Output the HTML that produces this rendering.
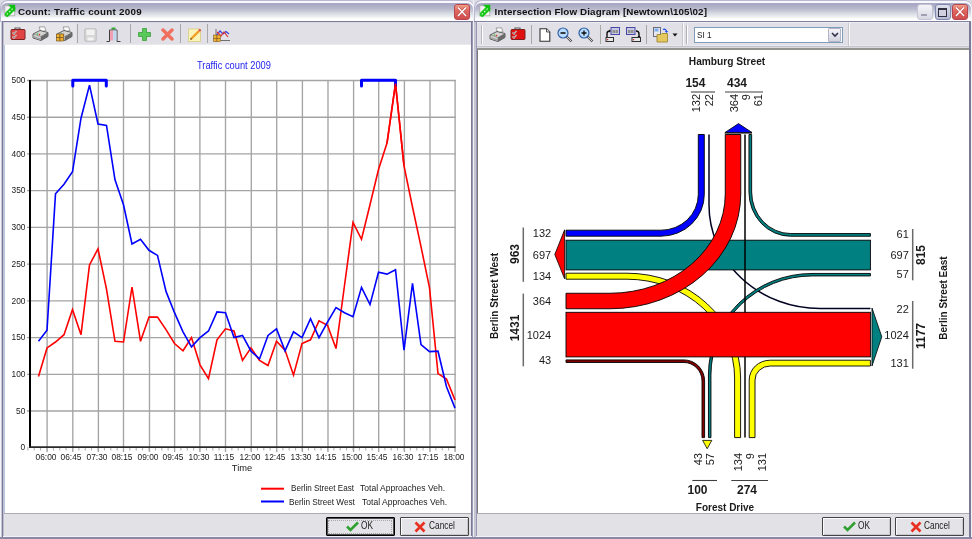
<!DOCTYPE html>
<html><head><meta charset="utf-8"><style>
html,body{margin:0;padding:0;width:972px;height:539px;overflow:hidden;background:#dcdce4;}
#root{position:absolute;left:0;top:0;width:972px;height:539px;will-change:transform;}
*{box-sizing:border-box;}
.abs{position:absolute;}
.t8{position:absolute;font:9.3px/11px 'Liberation Sans', sans-serif;color:#202020;white-space:nowrap;}
.tl{position:absolute;font:9px/11px 'Liberation Sans', sans-serif;color:#1a1a1a;white-space:nowrap;}
.title{position:absolute;background:linear-gradient(#a8a8c4 0px,#aaaac6 2px,#babace 6px,#d4d8e0 10px,#eef0f3 14px,#fff 16px,#fff 18px);}
.ttext{position:absolute;top:5.7px;font:bold 9.8px/11px 'Liberation Sans', sans-serif;color:#101010;white-space:nowrap;letter-spacing:0.25px;}
.tb{position:absolute;background:#e1e0e6;}
.panel{position:absolute;background:#e2e1e6;}
.btn{position:absolute;height:19px;border:1px solid #444;border-radius:1px;background:#e4e4e8;box-shadow:inset 1px 1px 0 #fbfbfc, inset -1px -1px 0 #c8c8cc;}
</style></head><body><div id="root">
<!-- LEFT WINDOW -->
<div class="abs" style="left:0;top:0;width:474px;height:539px;background:#f4f4f8;border-radius:7px 7px 0 0;"></div>
<div class="abs" style="left:0;top:0;width:474px;height:22px;border-radius:7px 7px 0 0;background:#b8b8d0;"></div>
<div class="abs" style="left:0.5px;top:1px;width:473px;height:21px;border-radius:7px 7px 0 0;background:#f8f8fc;"></div>
<div class="title" style="left:1px;top:2.5px;width:472px;height:18.5px;border-radius:6px 6px 0 0;"></div>
<div class="abs" style="left:1px;top:21px;width:1px;height:516px;background:#c8c8d8;"></div>
<div class="abs" style="left:2px;top:21px;width:472px;height:516px;background:#7a7a98;"></div>
<div class="abs" style="left:3px;top:22px;width:1px;height:515px;background:#c0c0d0;"></div>
<div class="abs" style="left:472px;top:22px;width:1px;height:515px;background:#9a9ab2;"></div>
<div class="abs" style="left:473px;top:0px;width:1px;height:539px;background:#f0f0f6;"></div>
<div class="abs" style="left:4px;top:22px;width:467px;height:1px;background:#d8d8e2;"></div>
<div class="tb" style="left:4px;top:23px;width:467px;height:22px;"></div>
<div class="abs" style="left:4px;top:23px;width:72px;height:21px;background:#e5e5ea;"></div>
<div class="abs" style="left:4px;top:44px;width:467px;height:1px;background:#eaeaee;"></div>
<div class="abs" style="left:4px;top:45px;width:1px;height:468px;background:#b8cce0;"></div>
<div class="abs" style="left:5px;top:45px;width:466px;height:468px;background:#fff;"></div>
<div class="abs" style="left:4px;top:513px;width:467px;height:1px;background:#acacb0;"></div>
<div class="panel" style="left:4px;top:514px;width:467px;height:22px;"></div><div class="abs" style="left:3px;top:536px;width:469px;height:1px;background:#f4f4f8;"></div>
<div class="abs" style="left:0;top:537px;width:474px;height:2px;background:#8a8aa6;"></div>
<div class="ttext" style="left:18px;">Count: Traffic count 2009</div>
<svg class="abs" style="left:3px;top:4px" width="14" height="14" viewBox="0 0 14 14">
<rect x="1.8" y="1.8" width="10" height="10" fill="#f2f2f2" stroke="#a8a8a8" stroke-width="0.8"/>
<path d="M4.2,10.3 L10,4.5" stroke="#18c818" stroke-width="5" stroke-linecap="round"/>
<path d="M5,0.8 L12.2,0.8 L12.2,8 Z" fill="#10c010"/>
<path d="M3.8,10.4 L4.8,9.4 M6.2,8 L7.2,7 M8.6,5.6 L9.6,4.6" stroke="#e8ffe0" stroke-width="1.1"/>
</svg><svg class="abs" style="left:10px;top:26px" width="16" height="16" viewBox="0 0 16 16">
<path d="M5,3.5 L5,2 L10,2 L10,3.5" fill="none" stroke="#606060" stroke-width="1.2"/>
<rect x="1" y="3.5" width="14" height="10" rx="1" fill="#e04444" stroke="#7a2020" stroke-width="1"/>
<path d="M2.5,6.5 L4,8 L6.5,4.8 M2.5,10.5 L4,12 L6.5,8.8" fill="none" stroke="#e8e8e8" stroke-width="1.3"/><path d="M2.5,6.5 L4,8 L6.5,4.8 M2.5,10.5 L4,12 L6.5,8.8" fill="none" stroke="#606060" stroke-width="0.6"/>
</svg><svg class="abs" style="left:32px;top:26px" width="17" height="16" viewBox="0 0 17 16">
<path d="M7,1 L12.5,0.8 L14,4.5 L9,6 Z" fill="#fafafa" stroke="#808080" stroke-width="0.7"/>
<path d="M1,8 L8,4.5 L16,6.5 L16,10.5 L9,14.5 L1,12 Z" fill="#d4d4d4" stroke="#505050" stroke-width="0.9"/>
<path d="M1,8 L9,10.5 L16,6.5 M9,10.5 L9,14.5" fill="none" stroke="#707070" stroke-width="0.6"/>
<path d="M9,14.5 L16,10.5 L16,6.5 L9,10.5 Z" fill="#6a6a6a"/>
<path d="M1.5,11.5 L9,14 L9,12.5 L1.5,10 Z" fill="#a0a0a0"/>
<circle cx="5.5" cy="8" r="0.8" fill="#30c030"/><circle cx="7.5" cy="8.6" r="0.8" fill="#e03030"/>

</svg><svg class="abs" style="left:56px;top:26px" width="17" height="16" viewBox="0 0 17 16">
<path d="M7,1 L12.5,0.8 L14,4.5 L9,6 Z" fill="#fafafa" stroke="#808080" stroke-width="0.7"/>
<path d="M1,8 L8,4.5 L16,6.5 L16,10.5 L9,14.5 L1,12 Z" fill="#d4d4d4" stroke="#505050" stroke-width="0.9"/>
<path d="M1,8 L9,10.5 L16,6.5 M9,10.5 L9,14.5" fill="none" stroke="#707070" stroke-width="0.6"/>
<path d="M9,14.5 L16,10.5 L16,6.5 L9,10.5 Z" fill="#6a6a6a"/>
<path d="M1.5,11.5 L9,14 L9,12.5 L1.5,10 Z" fill="#a0a0a0"/>
<circle cx="5.5" cy="8" r="0.8" fill="#30c030"/><circle cx="7.5" cy="8.6" r="0.8" fill="#e03030"/>
<g fill="#f0b030" stroke="#705020" stroke-width="0.6"><rect x="0.5" y="8" width="3.5" height="3.5"/><rect x="4" y="8" width="3.5" height="3.5"/><rect x="0.5" y="11.5" width="3.5" height="3.5"/><rect x="4" y="11.5" width="3.5" height="3.5"/></g>
</svg><div class="abs" style="left:77px;top:24px;width:1px;height:19px;background:#a8a8a8;"></div><svg class="abs" style="left:84px;top:28px" width="13" height="14" viewBox="0 0 13 14">
<rect x="0.8" y="0.8" width="11.4" height="12.4" rx="1" fill="#d8d8d8" stroke="#b8b8b8" stroke-width="0.9"/>
<rect x="2.5" y="1.5" width="8" height="5.5" fill="#f2f2f2"/>
<rect x="3.5" y="9.5" width="6" height="3" fill="#f4f4f4"/>
</svg><svg class="abs" style="left:106px;top:27px" width="16" height="16" viewBox="0 0 16 16">
<rect x="5.5" y="0.5" width="4" height="2" fill="#30b030"/>
<path d="M0.5,14.5 L3.5,14.5 L3.5,3 L11,3 L11,14.5 L14.5,14.5" fill="none" stroke="#404040" stroke-width="1"/>
<rect x="4" y="3.5" width="3" height="10" fill="#f0a0b0"/><rect x="7.2" y="3.5" width="3.3" height="10" fill="#c0d8f0"/>
</svg><div class="abs" style="left:130px;top:24px;width:1px;height:19px;background:#a8a8a8;"></div><svg class="abs" style="left:138px;top:28px" width="13" height="13" viewBox="0 0 13 13">
<path d="M4.5,0.5 H8.5 V4.5 H12.5 V8.5 H8.5 V12.5 H4.5 V8.5 H0.5 V4.5 H4.5 Z" fill="#58c858" stroke="#38a038" stroke-width="0.8"/>
</svg><svg class="abs" style="left:160.5px;top:28px" width="13" height="13" viewBox="0 0 13 13">
<path d="M2,2 L11,11 M11,2 L2,11" stroke="#f07060" stroke-width="3.4" stroke-linecap="round"/>
</svg><div class="abs" style="left:180px;top:24px;width:1px;height:19px;background:#a8a8a8;"></div><svg class="abs" style="left:187.5px;top:27.5px" width="14" height="14" viewBox="0 0 14 14">
<rect x="0.5" y="1" width="12" height="12.5" fill="#fbf4b8" stroke="#d8cc80" stroke-width="0.8"/>
<path d="M3,11 L11,3" stroke="#f0a020" stroke-width="2.4"/>
<path d="M11,3 L12.5,1.5" stroke="#e05050" stroke-width="2.4"/>
<path d="M2.5,11.5 L3.5,10.5" stroke="#604020" stroke-width="1.5"/>
</svg><div class="abs" style="left:207px;top:24px;width:1px;height:19px;background:#a8a8a8;"></div><svg class="abs" style="left:212.5px;top:29px" width="17" height="13" viewBox="0 0 17 13">
<path d="M3,0 V13 M1,11.5 H17" stroke="#707070" stroke-width="1"/>
<path d="M3,7 L7,2 L10,5 L13,2.5 L16,5" fill="none" stroke="#3040e0" stroke-width="1.2"/>
<path d="M4,3 L8,7 L11,3 L15,8" fill="none" stroke="#e03030" stroke-width="1.2"/>
<g fill="#f0b030" stroke="#705020" stroke-width="0.5"><rect x="0.5" y="6" width="3.5" height="3.3"/><rect x="4" y="6" width="3.5" height="3.3"/><rect x="0.5" y="9.3" width="3.5" height="3.3"/><rect x="4" y="9.3" width="3.5" height="3.3"/></g>
</svg>
<div class="abs" style="left:454px;top:4px;width:16px;height:16px;border-radius:3px;background:linear-gradient(#f0a088,#e06860 40%,#d04c4c);border:1px solid #b84450;"></div>
<svg class="abs" style="left:454px;top:4px" width="16" height="16"><path d="M4,3.5 L12,12 M12,3.5 L4,12" stroke="#a83838" stroke-width="2.6" opacity="0.6"/><path d="M4,3.5 L12,12 M12,3.5 L4,12" stroke="#fff" stroke-width="1.5"/></svg>
<svg class="abs" style="left:0;top:0" width="473" height="539">
<line x1="27" y1="80.5" x2="455.8" y2="80.5" stroke="#a4a4a4" stroke-width="1.35"/><line x1="27" y1="117.2" x2="455.8" y2="117.2" stroke="#a4a4a4" stroke-width="1.35"/><line x1="27" y1="153.9" x2="455.8" y2="153.9" stroke="#a4a4a4" stroke-width="1.35"/><line x1="27" y1="190.6" x2="455.8" y2="190.6" stroke="#a4a4a4" stroke-width="1.35"/><line x1="27" y1="227.4" x2="455.8" y2="227.4" stroke="#a4a4a4" stroke-width="1.35"/><line x1="27" y1="264.1" x2="455.8" y2="264.1" stroke="#a4a4a4" stroke-width="1.35"/><line x1="27" y1="300.8" x2="455.8" y2="300.8" stroke="#a4a4a4" stroke-width="1.35"/><line x1="27" y1="337.6" x2="455.8" y2="337.6" stroke="#a4a4a4" stroke-width="1.35"/><line x1="27" y1="374.3" x2="455.8" y2="374.3" stroke="#a4a4a4" stroke-width="1.35"/><line x1="27" y1="411.0" x2="455.8" y2="411.0" stroke="#a4a4a4" stroke-width="1.35"/><line x1="47.1" y1="80" x2="47.1" y2="452" stroke="#a4a4a4" stroke-width="1.35"/><line x1="72.8" y1="80" x2="72.8" y2="452" stroke="#a4a4a4" stroke-width="1.35"/><line x1="98.4" y1="80" x2="98.4" y2="452" stroke="#a4a4a4" stroke-width="1.35"/><line x1="123.5" y1="80" x2="123.5" y2="452" stroke="#a4a4a4" stroke-width="1.35"/><line x1="149.5" y1="80" x2="149.5" y2="452" stroke="#a4a4a4" stroke-width="1.35"/><line x1="174.6" y1="80" x2="174.6" y2="452" stroke="#a4a4a4" stroke-width="1.35"/><line x1="199.9" y1="80" x2="199.9" y2="452" stroke="#a4a4a4" stroke-width="1.35"/><line x1="225.5" y1="80" x2="225.5" y2="452" stroke="#a4a4a4" stroke-width="1.35"/><line x1="251.3" y1="80" x2="251.3" y2="452" stroke="#a4a4a4" stroke-width="1.35"/><line x1="276.7" y1="80" x2="276.7" y2="452" stroke="#a4a4a4" stroke-width="1.35"/><line x1="302.4" y1="80" x2="302.4" y2="452" stroke="#a4a4a4" stroke-width="1.35"/><line x1="328.0" y1="80" x2="328.0" y2="452" stroke="#a4a4a4" stroke-width="1.35"/><line x1="353.6" y1="80" x2="353.6" y2="452" stroke="#a4a4a4" stroke-width="1.35"/><line x1="378.7" y1="80" x2="378.7" y2="452" stroke="#a4a4a4" stroke-width="1.35"/><line x1="404.4" y1="80" x2="404.4" y2="452" stroke="#a4a4a4" stroke-width="1.35"/><line x1="430.0" y1="80" x2="430.0" y2="452" stroke="#a4a4a4" stroke-width="1.35"/><line x1="455.1" y1="80" x2="455.1" y2="452" stroke="#a4a4a4" stroke-width="1.35"/><line x1="27.9" y1="447" x2="27.9" y2="450.5" stroke="#a9a9a9" stroke-width="1"/><line x1="34.2" y1="447" x2="34.2" y2="450.5" stroke="#a9a9a9" stroke-width="1"/><line x1="40.6" y1="447" x2="40.6" y2="450.5" stroke="#a9a9a9" stroke-width="1"/><line x1="47.0" y1="447" x2="47.0" y2="450.5" stroke="#a9a9a9" stroke-width="1"/><line x1="53.4" y1="447" x2="53.4" y2="450.5" stroke="#a9a9a9" stroke-width="1"/><line x1="59.8" y1="447" x2="59.8" y2="450.5" stroke="#a9a9a9" stroke-width="1"/><line x1="66.1" y1="447" x2="66.1" y2="450.5" stroke="#a9a9a9" stroke-width="1"/><line x1="72.5" y1="447" x2="72.5" y2="450.5" stroke="#a9a9a9" stroke-width="1"/><line x1="78.9" y1="447" x2="78.9" y2="450.5" stroke="#a9a9a9" stroke-width="1"/><line x1="85.2" y1="447" x2="85.2" y2="450.5" stroke="#a9a9a9" stroke-width="1"/><line x1="91.6" y1="447" x2="91.6" y2="450.5" stroke="#a9a9a9" stroke-width="1"/><line x1="98.0" y1="447" x2="98.0" y2="450.5" stroke="#a9a9a9" stroke-width="1"/><line x1="104.4" y1="447" x2="104.4" y2="450.5" stroke="#a9a9a9" stroke-width="1"/><line x1="110.8" y1="447" x2="110.8" y2="450.5" stroke="#a9a9a9" stroke-width="1"/><line x1="117.1" y1="447" x2="117.1" y2="450.5" stroke="#a9a9a9" stroke-width="1"/><line x1="123.5" y1="447" x2="123.5" y2="450.5" stroke="#a9a9a9" stroke-width="1"/><line x1="129.9" y1="447" x2="129.9" y2="450.5" stroke="#a9a9a9" stroke-width="1"/><line x1="136.2" y1="447" x2="136.2" y2="450.5" stroke="#a9a9a9" stroke-width="1"/><line x1="142.6" y1="447" x2="142.6" y2="450.5" stroke="#a9a9a9" stroke-width="1"/><line x1="149.0" y1="447" x2="149.0" y2="450.5" stroke="#a9a9a9" stroke-width="1"/><line x1="155.4" y1="447" x2="155.4" y2="450.5" stroke="#a9a9a9" stroke-width="1"/><line x1="161.8" y1="447" x2="161.8" y2="450.5" stroke="#a9a9a9" stroke-width="1"/><line x1="168.1" y1="447" x2="168.1" y2="450.5" stroke="#a9a9a9" stroke-width="1"/><line x1="174.5" y1="447" x2="174.5" y2="450.5" stroke="#a9a9a9" stroke-width="1"/><line x1="180.9" y1="447" x2="180.9" y2="450.5" stroke="#a9a9a9" stroke-width="1"/><line x1="187.2" y1="447" x2="187.2" y2="450.5" stroke="#a9a9a9" stroke-width="1"/><line x1="193.6" y1="447" x2="193.6" y2="450.5" stroke="#a9a9a9" stroke-width="1"/><line x1="200.0" y1="447" x2="200.0" y2="450.5" stroke="#a9a9a9" stroke-width="1"/><line x1="206.4" y1="447" x2="206.4" y2="450.5" stroke="#a9a9a9" stroke-width="1"/><line x1="212.8" y1="447" x2="212.8" y2="450.5" stroke="#a9a9a9" stroke-width="1"/><line x1="219.1" y1="447" x2="219.1" y2="450.5" stroke="#a9a9a9" stroke-width="1"/><line x1="225.5" y1="447" x2="225.5" y2="450.5" stroke="#a9a9a9" stroke-width="1"/><line x1="231.9" y1="447" x2="231.9" y2="450.5" stroke="#a9a9a9" stroke-width="1"/><line x1="238.2" y1="447" x2="238.2" y2="450.5" stroke="#a9a9a9" stroke-width="1"/><line x1="244.6" y1="447" x2="244.6" y2="450.5" stroke="#a9a9a9" stroke-width="1"/><line x1="251.0" y1="447" x2="251.0" y2="450.5" stroke="#a9a9a9" stroke-width="1"/><line x1="257.4" y1="447" x2="257.4" y2="450.5" stroke="#a9a9a9" stroke-width="1"/><line x1="263.8" y1="447" x2="263.8" y2="450.5" stroke="#a9a9a9" stroke-width="1"/><line x1="270.1" y1="447" x2="270.1" y2="450.5" stroke="#a9a9a9" stroke-width="1"/><line x1="276.5" y1="447" x2="276.5" y2="450.5" stroke="#a9a9a9" stroke-width="1"/><line x1="282.9" y1="447" x2="282.9" y2="450.5" stroke="#a9a9a9" stroke-width="1"/><line x1="289.2" y1="447" x2="289.2" y2="450.5" stroke="#a9a9a9" stroke-width="1"/><line x1="295.6" y1="447" x2="295.6" y2="450.5" stroke="#a9a9a9" stroke-width="1"/><line x1="302.0" y1="447" x2="302.0" y2="450.5" stroke="#a9a9a9" stroke-width="1"/><line x1="308.4" y1="447" x2="308.4" y2="450.5" stroke="#a9a9a9" stroke-width="1"/><line x1="314.8" y1="447" x2="314.8" y2="450.5" stroke="#a9a9a9" stroke-width="1"/><line x1="321.1" y1="447" x2="321.1" y2="450.5" stroke="#a9a9a9" stroke-width="1"/><line x1="327.5" y1="447" x2="327.5" y2="450.5" stroke="#a9a9a9" stroke-width="1"/><line x1="333.9" y1="447" x2="333.9" y2="450.5" stroke="#a9a9a9" stroke-width="1"/><line x1="340.2" y1="447" x2="340.2" y2="450.5" stroke="#a9a9a9" stroke-width="1"/><line x1="346.6" y1="447" x2="346.6" y2="450.5" stroke="#a9a9a9" stroke-width="1"/><line x1="353.0" y1="447" x2="353.0" y2="450.5" stroke="#a9a9a9" stroke-width="1"/><line x1="359.4" y1="447" x2="359.4" y2="450.5" stroke="#a9a9a9" stroke-width="1"/><line x1="365.8" y1="447" x2="365.8" y2="450.5" stroke="#a9a9a9" stroke-width="1"/><line x1="372.1" y1="447" x2="372.1" y2="450.5" stroke="#a9a9a9" stroke-width="1"/><line x1="378.5" y1="447" x2="378.5" y2="450.5" stroke="#a9a9a9" stroke-width="1"/><line x1="384.9" y1="447" x2="384.9" y2="450.5" stroke="#a9a9a9" stroke-width="1"/><line x1="391.2" y1="447" x2="391.2" y2="450.5" stroke="#a9a9a9" stroke-width="1"/><line x1="397.6" y1="447" x2="397.6" y2="450.5" stroke="#a9a9a9" stroke-width="1"/><line x1="404.0" y1="447" x2="404.0" y2="450.5" stroke="#a9a9a9" stroke-width="1"/><line x1="410.4" y1="447" x2="410.4" y2="450.5" stroke="#a9a9a9" stroke-width="1"/><line x1="416.8" y1="447" x2="416.8" y2="450.5" stroke="#a9a9a9" stroke-width="1"/><line x1="423.1" y1="447" x2="423.1" y2="450.5" stroke="#a9a9a9" stroke-width="1"/><line x1="429.5" y1="447" x2="429.5" y2="450.5" stroke="#a9a9a9" stroke-width="1"/><line x1="435.9" y1="447" x2="435.9" y2="450.5" stroke="#a9a9a9" stroke-width="1"/><line x1="442.2" y1="447" x2="442.2" y2="450.5" stroke="#a9a9a9" stroke-width="1"/><line x1="448.6" y1="447" x2="448.6" y2="450.5" stroke="#a9a9a9" stroke-width="1"/><line x1="455.0" y1="447" x2="455.0" y2="450.5" stroke="#a9a9a9" stroke-width="1"/><line x1="30" y1="80" x2="30" y2="448" stroke="#000" stroke-width="2"/><line x1="29" y1="447.1" x2="455.5" y2="447.1" stroke="#2a2a2a" stroke-width="1.8"/><polyline points="38.5,376.5 47.0,347.9 55.5,342.0 64.0,334.7 72.5,309.4 81.0,334.7 89.5,265.0 98.0,248.8 106.5,289.2 115.0,341.3 123.5,342.0 132.0,287.0 140.5,341.3 149.0,317.1 157.5,317.1 166.0,329.6 174.5,343.5 183.0,350.8 191.5,337.6 200.0,364.8 208.5,378.7 217.0,339.8 225.5,328.8 234.0,331.0 242.5,360.4 251.0,347.9 259.5,360.4 268.0,365.5 276.5,341.3 285.0,350.1 293.5,375.1 302.0,343.5 310.5,339.8 319.0,320.8 327.5,325.2 336.0,348.6 344.5,285.5 353.0,222.4 361.5,239.3 370.0,204.8 378.5,169.5 387.0,143.1 395.5,83.7 404.0,165.9 412.5,207.0 421.0,246.6 429.5,287.7 438.0,373.6 446.5,379.1 455.0,400.0" fill="none" stroke="#ff0000" stroke-width="1.6" stroke-linejoin="miter"/><polyline points="38.5,341.3 47.0,330.3 55.5,193.8 64.0,184.2 72.5,171.8 81.0,118.2 89.5,85.1 98.0,124.0 106.5,125.5 115.0,179.8 123.5,204.8 132.0,244.0 140.5,239.3 149.0,250.3 157.5,255.4 166.0,291.4 174.5,312.7 183.0,331.8 191.5,346.8 200.0,337.6 208.5,331.0 217.0,311.9 225.5,312.7 234.0,337.6 242.5,335.4 251.0,351.2 259.5,358.9 268.0,335.4 276.5,328.8 285.0,350.8 293.5,331.8 302.0,337.6 310.5,318.6 319.0,337.6 327.5,322.2 336.0,307.5 344.5,312.7 353.0,316.7 361.5,287.4 370.0,304.6 378.5,272.3 387.0,274.1 395.5,269.7 404.0,350.1 412.5,283.3 421.0,344.5 429.5,351.6 438.0,351.2 446.5,386.8 455.0,408.1" fill="none" stroke="#0000ff" stroke-width="1.6"/><polyline points="72.8,86 72.8,80.2 106.3,80.2 106.3,86" fill="none" stroke="#0000ff" stroke-width="3" stroke-linecap="round" stroke-linejoin="round"/><polyline points="361.5,86 361.5,80.2 395.5,80.2 395.5,86" fill="none" stroke="#0000ff" stroke-width="3" stroke-linecap="round" stroke-linejoin="round"/><polyline points="387.0,143.1 395.5,83.7 404.0,165.9" fill="none" stroke="#ff0000" stroke-width="1.6"/><line x1="261" y1="488.7" x2="284" y2="488.7" stroke="#ff0000" stroke-width="2"/><line x1="261" y1="501.5" x2="284" y2="501.5" stroke="#0000ff" stroke-width="2"/>
</svg>
<div class="t8" style="right:946.6px;top:75.2px;text-align:right;transform:scaleX(0.9);transform-origin:100% 0">500</div><div class="t8" style="right:946.6px;top:111.9px;text-align:right;transform:scaleX(0.9);transform-origin:100% 0">450</div><div class="t8" style="right:946.6px;top:148.6px;text-align:right;transform:scaleX(0.9);transform-origin:100% 0">400</div><div class="t8" style="right:946.6px;top:185.3px;text-align:right;transform:scaleX(0.9);transform-origin:100% 0">350</div><div class="t8" style="right:946.6px;top:222.1px;text-align:right;transform:scaleX(0.9);transform-origin:100% 0">300</div><div class="t8" style="right:946.6px;top:258.8px;text-align:right;transform:scaleX(0.9);transform-origin:100% 0">250</div><div class="t8" style="right:946.6px;top:295.5px;text-align:right;transform:scaleX(0.9);transform-origin:100% 0">200</div><div class="t8" style="right:946.6px;top:332.3px;text-align:right;transform:scaleX(0.9);transform-origin:100% 0">150</div><div class="t8" style="right:946.6px;top:369.0px;text-align:right;transform:scaleX(0.9);transform-origin:100% 0">100</div><div class="t8" style="right:946.6px;top:405.7px;text-align:right;transform:scaleX(0.9);transform-origin:100% 0">50</div><div class="t8" style="right:946.6px;top:442.4px;text-align:right;transform:scaleX(0.9);transform-origin:100% 0">0</div><div class="t8" style="left:30.7px;width:30px;top:451.6px;text-align:center;transform:scaleX(0.9);transform-origin:50% 0">06:00</div><div class="t8" style="left:56.2px;width:30px;top:451.6px;text-align:center;transform:scaleX(0.9);transform-origin:50% 0">06:45</div><div class="t8" style="left:81.7px;width:30px;top:451.6px;text-align:center;transform:scaleX(0.9);transform-origin:50% 0">07:30</div><div class="t8" style="left:107.2px;width:30px;top:451.6px;text-align:center;transform:scaleX(0.9);transform-origin:50% 0">08:15</div><div class="t8" style="left:132.7px;width:30px;top:451.6px;text-align:center;transform:scaleX(0.9);transform-origin:50% 0">09:00</div><div class="t8" style="left:158.2px;width:30px;top:451.6px;text-align:center;transform:scaleX(0.9);transform-origin:50% 0">09:45</div><div class="t8" style="left:183.7px;width:30px;top:451.6px;text-align:center;transform:scaleX(0.9);transform-origin:50% 0">10:30</div><div class="t8" style="left:209.2px;width:30px;top:451.6px;text-align:center;transform:scaleX(0.9);transform-origin:50% 0">11:15</div><div class="t8" style="left:234.7px;width:30px;top:451.6px;text-align:center;transform:scaleX(0.9);transform-origin:50% 0">12:00</div><div class="t8" style="left:260.2px;width:30px;top:451.6px;text-align:center;transform:scaleX(0.9);transform-origin:50% 0">12:45</div><div class="t8" style="left:285.7px;width:30px;top:451.6px;text-align:center;transform:scaleX(0.9);transform-origin:50% 0">13:30</div><div class="t8" style="left:311.2px;width:30px;top:451.6px;text-align:center;transform:scaleX(0.9);transform-origin:50% 0">14:15</div><div class="t8" style="left:336.7px;width:30px;top:451.6px;text-align:center;transform:scaleX(0.9);transform-origin:50% 0">15:00</div><div class="t8" style="left:362.2px;width:30px;top:451.6px;text-align:center;transform:scaleX(0.9);transform-origin:50% 0">15:45</div><div class="t8" style="left:387.7px;width:30px;top:451.6px;text-align:center;transform:scaleX(0.9);transform-origin:50% 0">16:30</div><div class="t8" style="left:413.2px;width:30px;top:451.6px;text-align:center;transform:scaleX(0.9);transform-origin:50% 0">17:15</div><div class="t8" style="left:438.7px;width:30px;top:451.6px;text-align:center;transform:scaleX(0.9);transform-origin:50% 0">18:00</div><div class="t8" style="left:227px;width:30px;top:463px;text-align:center">Time</div><div class="tl" style="left:290.7px;top:483.3px;transform:scaleX(0.9);transform-origin:0 0">Berlin Street East</div><div class="tl" style="left:359.9px;top:483.3px;transform:scaleX(0.95);transform-origin:0 0">Total Approaches Veh.</div><div class="tl" style="left:289.3px;top:497px;transform:scaleX(0.91);transform-origin:0 0">Berlin Street West</div><div class="tl" style="left:361.7px;top:497px;transform:scaleX(0.95);transform-origin:0 0">Total Approaches Veh.</div><div style="position:absolute;left:197.3px;top:59.6px;font:10px/11px 'Liberation Sans', sans-serif;color:#2222ee;transform:scaleX(0.93);transform-origin:0 0">Traffic count 2009</div>
<div class="btn" style="left:325.5px;top:517px;width:69px;border:1px solid #000;box-shadow:inset 1px 1px 0 #505050, inset -1px -1px 0 #505050;"></div>
<div class="abs" style="left:328px;top:519.5px;width:64px;height:14px;border:1px dotted #a8a8a8;"></div>
<svg class="abs" style="left:346px;top:521px" width="13" height="11" viewBox="0 0 13 11">
<path d="M1,5.5 L4.5,9 L12,1.5" fill="none" stroke="#30a030" stroke-width="2.6"/>
</svg>
<div class="abs" style="left:361px;top:518.3px;font:10.4px/15px 'Liberation Sans', sans-serif;color:#222;transform:scaleX(0.8);transform-origin:0 0">OK</div>
<div class="btn" style="left:399.5px;top:517px;width:69px;"></div>
<svg class="abs" style="left:414px;top:521px" width="12" height="12" viewBox="0 0 12 12">
<path d="M1.5,1.5 L10.5,10.5 M10.5,1.5 L1.5,10.5" stroke="#e83020" stroke-width="2.6"/>
</svg>
<div class="abs" style="left:428.7px;top:518.3px;font:10.4px/15px 'Liberation Sans', sans-serif;color:#222;transform:scaleX(0.8);transform-origin:0 0">Cancel</div>

<!-- RIGHT WINDOW -->
<div class="abs" style="left:474px;top:0;width:498px;height:539px;background:#f2f2f6;border-radius:7px 7px 0 0;"></div>
<div class="abs" style="left:474px;top:0;width:498px;height:22px;border-radius:7px 7px 0 0;background:#b8b8d0;"></div>
<div class="abs" style="left:474.5px;top:1px;width:497px;height:21px;border-radius:7px 7px 0 0;background:#f8f8fc;"></div>
<div class="title" style="left:475px;top:2.5px;width:496px;height:18.5px;border-radius:6px 6px 0 0;"></div>
<div class="abs" style="left:474px;top:21px;width:2px;height:516px;background:#c4c4d2;"></div>
<div class="abs" style="left:476px;top:21px;width:1px;height:516px;background:#9a9ab4;"></div>
<div class="abs" style="left:969px;top:21px;width:2px;height:516px;background:#7a7a94;"></div>
<div class="abs" style="left:474px;top:21px;width:497px;height:1px;background:#8080a0;"></div>
<div class="abs" style="left:477px;top:22px;width:492px;height:1px;background:#ececf2;"></div>
<div class="tb" style="left:477px;top:23px;width:492px;height:23px;"></div>
<div class="abs" style="left:477px;top:45px;width:492px;height:1px;background:#e8e8ee;"></div>
<div class="abs" style="left:477px;top:46px;width:492px;height:1px;background:#c4c4cc;"></div>
<div class="abs" style="left:477px;top:47px;width:492px;height:1px;background:#dadade;"></div>
<div class="abs" style="left:477px;top:48px;width:492px;height:2px;background:#949490;"></div>
<div class="abs" style="left:477px;top:50px;width:1px;height:463px;background:#7a7a7a;"></div>
<div class="abs" style="left:478px;top:50px;width:491px;height:463px;background:#fff;"></div>
<div class="abs" style="left:477px;top:513px;width:492px;height:1px;background:#acacb0;"></div>
<div class="panel" style="left:477px;top:514px;width:492px;height:22px;"></div><div class="abs" style="left:476px;top:536px;width:493px;height:1px;background:#f4f4f8;"></div>
<div class="abs" style="left:474px;top:537px;width:498px;height:2px;background:#8a8aa6;"></div>
<svg class="abs" style="left:477.5px;top:4px" width="14" height="14" viewBox="0 0 14 14">
<rect x="1.8" y="1.8" width="10" height="10" fill="#f2f2f2" stroke="#a8a8a8" stroke-width="0.8"/>
<path d="M4.2,10.3 L10,4.5" stroke="#18c818" stroke-width="5" stroke-linecap="round"/>
<path d="M5,0.8 L12.2,0.8 L12.2,8 Z" fill="#10c010"/>
<path d="M3.8,10.4 L4.8,9.4 M6.2,8 L7.2,7 M8.6,5.6 L9.6,4.6" stroke="#e8ffe0" stroke-width="1.1"/>
</svg><div class="abs" style="left:481px;top:25px;width:1px;height:19px;background:#b8b8c0"></div><div class="abs" style="left:482px;top:25px;width:1px;height:19px;background:#fff"></div><svg class="abs" style="left:488.5px;top:27px" width="17" height="16" viewBox="0 0 17 16">
<path d="M7,1 L12.5,0.8 L14,4.5 L9,6 Z" fill="#fafafa" stroke="#808080" stroke-width="0.7"/>
<path d="M1,8 L8,4.5 L16,6.5 L16,10.5 L9,14.5 L1,12 Z" fill="#d4d4d4" stroke="#505050" stroke-width="0.9"/>
<path d="M1,8 L9,10.5 L16,6.5 M9,10.5 L9,14.5" fill="none" stroke="#707070" stroke-width="0.6"/>
<path d="M9,14.5 L16,10.5 L16,6.5 L9,10.5 Z" fill="#6a6a6a"/>
<path d="M1.5,11.5 L9,14 L9,12.5 L1.5,10 Z" fill="#a0a0a0"/>
<circle cx="5.5" cy="8" r="0.8" fill="#30c030"/><circle cx="7.5" cy="8.6" r="0.8" fill="#e03030"/>

</svg><svg class="abs" style="left:510px;top:26px" width="16" height="16" viewBox="0 0 16 16">
<path d="M5,3.5 L5,2 L10,2 L10,3.5" fill="none" stroke="#606060" stroke-width="1.2"/>
<rect x="1" y="3.5" width="14" height="10" rx="1" fill="#e01010" stroke="#7a2020" stroke-width="1"/>
<path d="M2.5,6.5 L4,8 L6.5,4.8 M2.5,10.5 L4,12 L6.5,8.8" fill="none" stroke="#e8e8e8" stroke-width="1.3"/><path d="M2.5,6.5 L4,8 L6.5,4.8 M2.5,10.5 L4,12 L6.5,8.8" fill="none" stroke="#606060" stroke-width="0.6"/>
</svg><div class="abs" style="left:531px;top:25px;width:1px;height:19px;background:#a8a8a8;"></div><svg class="abs" style="left:538.5px;top:28px" width="12" height="14" viewBox="0 0 12 14">
<path d="M1,0.8 H7.5 L10.8,4 V13.2 H1 Z" fill="#fff" stroke="#303030" stroke-width="1.1"/>
<path d="M7.5,0.8 V4 H10.8" fill="#e0e0e0" stroke="#303030" stroke-width="0.8"/>
</svg><svg class="abs" style="left:557px;top:27px" width="16" height="16" viewBox="0 0 16 16">
<path d="M9.5,9.5 L14.5,14.5" stroke="#505050" stroke-width="2.4"/>
<path d="M9.5,9.5 L14.5,14.5" stroke="#d8d8d8" stroke-width="1"/>
<circle cx="6" cy="6" r="5" fill="#b8dcff" stroke="#3060a8" stroke-width="1.2"/>
<path d="M3.5,6 H8.5" stroke="#101010" stroke-width="1.6"/>
</svg><svg class="abs" style="left:578px;top:27px" width="16" height="16" viewBox="0 0 16 16">
<path d="M9.5,9.5 L14.5,14.5" stroke="#505050" stroke-width="2.4"/>
<path d="M9.5,9.5 L14.5,14.5" stroke="#d8d8d8" stroke-width="1"/>
<circle cx="6" cy="6" r="5" fill="#b8dcff" stroke="#3060a8" stroke-width="1.2"/>
<path d="M3.5,6 H8.5 M6,3.5 V8.5" stroke="#101010" stroke-width="1.4"/>
</svg><div class="abs" style="left:600px;top:25px;width:1px;height:19px;background:#a8a8a8;"></div><svg class="abs" style="left:605px;top:27px" width="16" height="16" viewBox="0 0 16 16"><rect x="6" y="0.5" width="8.5" height="7" fill="#c8c8e0" stroke="#4848a8" stroke-width="1"/>
<rect x="7.5" y="3" width="2.5" height="3" fill="#909090"/><rect x="10.5" y="3" width="2.5" height="3" fill="#909090"/>
<path d="M2,13 V6.5 Q2,4 5,4" fill="none" stroke="#101010" stroke-width="1.4"/><path d="M4,2.5 L6,4 L4,5.5 Z" fill="#101010"/>
<rect x="1" y="10.5" width="7.5" height="4" fill="#e8e8e8" stroke="#303030" stroke-width="1"/><rect x="2" y="12" width="1.2" height="1.2" fill="#e02020"/></svg><svg class="abs" style="left:626px;top:27px" width="16" height="16" viewBox="0 0 16 16"><rect x="0.5" y="0.5" width="8.5" height="7" fill="#c8c8e0" stroke="#4848a8" stroke-width="1"/>
<rect x="2" y="3" width="2.5" height="3" fill="#909090"/><rect x="5" y="3" width="2.5" height="3" fill="#909090"/>
<path d="M10,4 Q13,4 13,7 V10" fill="none" stroke="#101010" stroke-width="1.4"/><path d="M11.5,9 L13,11 L14.5,9 Z" fill="#101010"/>
<rect x="6" y="10.5" width="8.5" height="4" fill="#e8e8e8" stroke="#303030" stroke-width="1"/><rect x="7" y="12" width="1.2" height="1.2" fill="#e02020"/></svg><div class="abs" style="left:646px;top:25px;width:1px;height:19px;background:#a8a8a8;"></div><svg class="abs" style="left:652.5px;top:26.5px" width="17" height="16" viewBox="0 0 17 16">
<rect x="0.5" y="0.5" width="7" height="9" fill="#e8e8f0" stroke="#606070" stroke-width="0.9"/>
<rect x="1.5" y="1.5" width="4" height="3" fill="#7ab0f0"/>
<path d="M4,7.5 H8 L9,6.5 H14.5 V15 H4 Z" fill="#e6c860" stroke="#a08830" stroke-width="0.9"/>
<path d="M10,2.5 Q13,1.5 13.5,4.5" fill="none" stroke="#2050f0" stroke-width="1.3"/><path d="M11.8,4 L13.5,6 L15.2,4 Z" fill="#2050f0"/>
</svg><svg class="abs" style="left:672px;top:33px" width="6" height="4"><path d="M0.5,0.5 L5.5,0.5 L3,3.5 Z" fill="#101010"/></svg><div class="abs" style="left:682px;top:23px;width:1px;height:23px;background:#c8c8cc"></div><div class="abs" style="left:683px;top:23px;width:1px;height:23px;background:#fafafa"></div><div class="abs" style="left:686px;top:25px;width:1px;height:19px;background:#b0b0b8"></div><div class="abs" style="left:687px;top:25px;width:1px;height:19px;background:#fff"></div><div class="abs" style="left:848px;top:23px;width:1px;height:23px;background:#c8c8cc"></div><div class="abs" style="left:849px;top:23px;width:1px;height:23px;background:#fafafa"></div><div class="abs" style="left:693.5px;top:27px;width:149px;height:16px;background:#fff;border:1px solid #7f9db9;"></div><div class="abs" style="left:697px;top:28.3px;font:9.6px/14px 'Liberation Sans', sans-serif;color:#202020;transform:scaleX(0.85);transform-origin:0 0">SI 1</div><div class="abs" style="left:828px;top:28px;width:13px;height:14px;background:linear-gradient(#f4f4f8,#d4d4e0);border:1px solid #b4b4c8;border-radius:1px"></div><svg class="abs" style="left:831px;top:32px" width="8" height="6"><path d="M1,1 L4,4 L7,1" fill="none" stroke="#303048" stroke-width="1.6"/></svg><div class="abs" style="left:917px;top:4px;width:16px;height:16px;border-radius:3px;background:linear-gradient(#f4f4f8,#d8d8e4);border:1px solid #c4c4d4"></div><div class="abs" style="left:921px;top:14px;width:6px;height:2px;background:#a0a0b0"></div><div class="abs" style="left:934.5px;top:4px;width:16px;height:16px;border-radius:3px;background:linear-gradient(#e0e0ec,#b8bcd4);border:1px solid #8088b0"></div><div class="abs" style="left:938px;top:7.5px;width:9px;height:9px;border:1px solid #303040;border-top-width:2px;background:#d0d0e0"></div><div class="abs" style="left:952px;top:4px;width:16px;height:16px;border-radius:3px;background:linear-gradient(#f0a088,#e06860 40%,#d04c4c);border:1px solid #b84450;"></div><svg class="abs" style="left:952px;top:4px" width="16" height="16"><path d="M4,3.5 L12,12 M12,3.5 L4,12" stroke="#a83838" stroke-width="2.6" opacity="0.6"/><path d="M4,3.5 L12,12 M12,3.5 L4,12" stroke="#fff" stroke-width="1.5"/></svg>
<div class="ttext" style="left:494.6px;letter-spacing:0.12px">Intersection Flow Diagram [Newtown\105\02]</div>
<svg class="abs" style="left:474px;top:0" width="498" height="539">
<g transform="translate(-474,0)">
<path d="M566.00,236.20 L661.00,236.20 A43.30,41.70 0 0 0 704.30,194.50 L704.30,134.50 L698.30,134.50 L698.30,194.50 A37.30,35.70 0 0 1 661.00,230.20 L566.00,230.20 Z" fill="#0000ff" stroke="#000000" stroke-width="0.9"/><path d="M870.40,308.60 L820.00,308.60 A111.00,103.60 0 0 1 709.00,205.00 L709.00,134.50" fill="none" stroke="#000020" stroke-width="1.5"/><path d="M870.40,236.25 L790.60,236.25 A41.65,44.25 0 0 1 748.95,192.00 L748.95,134.50 L751.65,134.50 L751.65,192.00 A38.95,41.55 0 0 0 790.60,233.55 L870.40,233.55 Z" fill="#008080" stroke="#000000" stroke-width="0.9"/><rect x="566" y="240.2" width="304.4" height="29.7" fill="#008080" stroke="#000000" stroke-width="0.9"/><path d="M870.40,273.45 L812.00,273.45 A103.55,101.55 0 0 0 708.45,375.00 L708.45,437.60 L710.95,437.60 L710.95,375.00 A101.05,99.05 0 0 1 812.00,275.95 L870.40,275.95 Z" fill="#008080" stroke="#000000" stroke-width="0.9"/><path d="M566.00,273.20 L627.00,273.20 A113.60,104.80 0 0 1 740.60,378.00 L740.60,437.60 L734.60,437.60 L734.60,378.00 A107.60,98.80 0 0 0 627.00,279.20 L566.00,279.20 Z" fill="#ffff00" stroke="#000000" stroke-width="0.9"/><line x1="745" y1="134.5" x2="745" y2="437.6" stroke="#000" stroke-width="1.5"/><path d="M870.40,360.20 L770.20,360.20 A21.00,19.80 0 0 0 749.20,380.00 L749.20,437.60 L755.00,437.60 L755.00,380.00 A15.20,14.00 0 0 1 770.20,366.00 L870.40,366.00 Z" fill="#ffff00" stroke="#000000" stroke-width="0.9"/><path d="M566.00,308.75 L610.00,308.75 A130.75,114.75 0 0 0 740.75,194.00 L740.75,134.50 L725.25,134.50 L725.25,194.00 A115.25,99.25 0 0 1 610.00,293.25 L566.00,293.25 Z" fill="#ff0000" stroke="#000000" stroke-width="0.9"/><rect x="566" y="312.3" width="304.4" height="44.6" fill="#ff0000" stroke="#000000" stroke-width="0.9"/><path d="M566.00,359.90 L684.00,359.90 A20.60,21.10 0 0 1 704.60,381.00 L704.60,437.60 L702.00,437.60 L702.00,381.00 A18.00,18.50 0 0 0 684.00,362.50 L566.00,362.50 Z" fill="#800000" stroke="#000000" stroke-width="0.9"/><polygon points="725,132.5 738.5,123.6 752,132.5" fill="#0000ff" stroke="#000000" stroke-width="0.8"/><line x1="724.5" y1="133.2" x2="752" y2="133.2" stroke="#000" stroke-width="0.8"/><polygon points="564.6,229.8 554.8,254.5 564.6,278.8" fill="#ff0000" stroke="#000000" stroke-width="0.8"/><polygon points="872,308 881.8,336.8 872,366" fill="#008080" stroke="#000000" stroke-width="0.8"/><polygon points="702.6,440.4 711.8,440.4 707.2,448.7" fill="#ffff00" stroke="#000000" stroke-width="0.8"/><line x1="690.9" y1="92" x2="715" y2="92" stroke="#808080" stroke-width="1.6"/><line x1="725" y1="92" x2="763" y2="92" stroke="#808080" stroke-width="1.6"/><line x1="692.3" y1="480.5" x2="717" y2="480.5" stroke="#404040" stroke-width="1.1"/><line x1="731.3" y1="480.5" x2="768" y2="480.5" stroke="#404040" stroke-width="1.1"/><line x1="523.3" y1="227.5" x2="523.3" y2="281.8" stroke="#6a6a6a" stroke-width="1.5"/><line x1="523.3" y1="293.6" x2="523.3" y2="366.3" stroke="#6a6a6a" stroke-width="1.5"/><line x1="912.7" y1="229" x2="912.7" y2="280.3" stroke="#6a6a6a" stroke-width="1.5"/><line x1="912.7" y1="301" x2="912.7" y2="368.7" stroke="#6a6a6a" stroke-width="1.5"/>
</g>
</svg>
<div style="position:absolute;left:667px;width:120px;text-align:center;top:55.3px;height:14px;line-height:14px;font:bold 10.2px/14px 'Liberation Sans', sans-serif;color:#1a1a1a;white-space:nowrap;">Hamburg Street</div><div style="position:absolute;left:685.4px;top:75.7px;height:14px;line-height:14px;font:bold 12px/14px 'Liberation Sans', sans-serif;color:#1a1a1a;white-space:nowrap;">154</div><div style="position:absolute;left:727px;top:75.7px;height:14px;line-height:14px;font:bold 12px/14px 'Liberation Sans', sans-serif;color:#1a1a1a;white-space:nowrap;">434</div><div style="position:absolute;left:687.5px;top:482.5px;height:14px;line-height:14px;font:bold 12px/14px 'Liberation Sans', sans-serif;color:#1a1a1a;white-space:nowrap;">100</div><div style="position:absolute;left:737px;top:482.5px;height:14px;line-height:14px;font:bold 12px/14px 'Liberation Sans', sans-serif;color:#1a1a1a;white-space:nowrap;">274</div><div style="position:absolute;left:665px;width:120px;text-align:center;top:500.8px;height:14px;line-height:14px;font:bold 10px/14px 'Liberation Sans', sans-serif;color:#1a1a1a;white-space:nowrap;">Forest Drive</div><div style="position:absolute;left:646.4px;top:137px;width:100px;height:14px;transform:rotate(-90deg);transform-origin:50px 7px;text-align:right;font:normal 11px/14px 'Liberation Sans', sans-serif;color:#1a1a1a;white-space:nowrap;">132</div><div style="position:absolute;left:659.2px;top:137px;width:100px;height:14px;transform:rotate(-90deg);transform-origin:50px 7px;text-align:right;font:normal 11px/14px 'Liberation Sans', sans-serif;color:#1a1a1a;white-space:nowrap;">22</div><div style="position:absolute;left:683.5px;top:137px;width:100px;height:14px;transform:rotate(-90deg);transform-origin:50px 7px;text-align:right;font:normal 11px/14px 'Liberation Sans', sans-serif;color:#1a1a1a;white-space:nowrap;">364</div><div style="position:absolute;left:695.5px;top:137px;width:100px;height:14px;transform:rotate(-90deg);transform-origin:50px 7px;text-align:right;font:normal 11px/14px 'Liberation Sans', sans-serif;color:#1a1a1a;white-space:nowrap;">9</div><div style="position:absolute;left:708.2px;top:137px;width:100px;height:14px;transform:rotate(-90deg);transform-origin:50px 7px;text-align:right;font:normal 11px/14px 'Liberation Sans', sans-serif;color:#1a1a1a;white-space:nowrap;">61</div><div style="position:absolute;left:647.6px;top:496.4px;width:100px;height:14px;transform:rotate(-90deg);transform-origin:50px 7px;text-align:right;font:normal 11px/14px 'Liberation Sans', sans-serif;color:#1a1a1a;white-space:nowrap;">43</div><div style="position:absolute;left:659.7px;top:496.4px;width:100px;height:14px;transform:rotate(-90deg);transform-origin:50px 7px;text-align:right;font:normal 11px/14px 'Liberation Sans', sans-serif;color:#1a1a1a;white-space:nowrap;">57</div><div style="position:absolute;left:687.6px;top:496.4px;width:100px;height:14px;transform:rotate(-90deg);transform-origin:50px 7px;text-align:right;font:normal 11px/14px 'Liberation Sans', sans-serif;color:#1a1a1a;white-space:nowrap;">134</div><div style="position:absolute;left:700.2px;top:496.4px;width:100px;height:14px;transform:rotate(-90deg);transform-origin:50px 7px;text-align:right;font:normal 11px/14px 'Liberation Sans', sans-serif;color:#1a1a1a;white-space:nowrap;">9</div><div style="position:absolute;left:711.8px;top:496.4px;width:100px;height:14px;transform:rotate(-90deg);transform-origin:50px 7px;text-align:right;font:normal 11px/14px 'Liberation Sans', sans-serif;color:#1a1a1a;white-space:nowrap;">131</div><div style="position:absolute;right:420.79999999999995px;text-align:right;top:226.4px;height:14px;line-height:14px;font:normal 11px/14px 'Liberation Sans', sans-serif;color:#1a1a1a;white-space:nowrap;">132</div><div style="position:absolute;right:420.79999999999995px;text-align:right;top:247.5px;height:14px;line-height:14px;font:normal 11px/14px 'Liberation Sans', sans-serif;color:#1a1a1a;white-space:nowrap;">697</div><div style="position:absolute;right:420.79999999999995px;text-align:right;top:268.8px;height:14px;line-height:14px;font:normal 11px/14px 'Liberation Sans', sans-serif;color:#1a1a1a;white-space:nowrap;">134</div><div style="position:absolute;right:420.79999999999995px;text-align:right;top:294px;height:14px;line-height:14px;font:normal 11px/14px 'Liberation Sans', sans-serif;color:#1a1a1a;white-space:nowrap;">364</div><div style="position:absolute;right:420.79999999999995px;text-align:right;top:327.6px;height:14px;line-height:14px;font:normal 11px/14px 'Liberation Sans', sans-serif;color:#1a1a1a;white-space:nowrap;">1024</div><div style="position:absolute;right:420.79999999999995px;text-align:right;top:353.4px;height:14px;line-height:14px;font:normal 11px/14px 'Liberation Sans', sans-serif;color:#1a1a1a;white-space:nowrap;">43</div><div style="position:absolute;right:63.200000000000045px;text-align:right;top:226.5px;height:14px;line-height:14px;font:normal 11px/14px 'Liberation Sans', sans-serif;color:#1a1a1a;white-space:nowrap;">61</div><div style="position:absolute;right:63.200000000000045px;text-align:right;top:247.5px;height:14px;line-height:14px;font:normal 11px/14px 'Liberation Sans', sans-serif;color:#1a1a1a;white-space:nowrap;">697</div><div style="position:absolute;right:63.200000000000045px;text-align:right;top:267.3px;height:14px;line-height:14px;font:normal 11px/14px 'Liberation Sans', sans-serif;color:#1a1a1a;white-space:nowrap;">57</div><div style="position:absolute;right:63.200000000000045px;text-align:right;top:301.5px;height:14px;line-height:14px;font:normal 11px/14px 'Liberation Sans', sans-serif;color:#1a1a1a;white-space:nowrap;">22</div><div style="position:absolute;right:63.200000000000045px;text-align:right;top:328px;height:14px;line-height:14px;font:normal 11px/14px 'Liberation Sans', sans-serif;color:#1a1a1a;white-space:nowrap;">1024</div><div style="position:absolute;right:63.200000000000045px;text-align:right;top:355.5px;height:14px;line-height:14px;font:normal 11px/14px 'Liberation Sans', sans-serif;color:#1a1a1a;white-space:nowrap;">131</div><div style="position:absolute;left:455px;top:246.5px;width:120px;height:14px;transform:rotate(-90deg);transform-origin:60px 7px;text-align:center;font:bold 12px/14px 'Liberation Sans', sans-serif;color:#1a1a1a;white-space:nowrap;">963</div><div style="position:absolute;left:455px;top:320.7px;width:120px;height:14px;transform:rotate(-90deg);transform-origin:60px 7px;text-align:center;font:bold 12px/14px 'Liberation Sans', sans-serif;color:#1a1a1a;white-space:nowrap;">1431</div><div style="position:absolute;left:861.2px;top:247.6px;width:120px;height:14px;transform:rotate(-90deg);transform-origin:60px 7px;text-align:center;font:bold 12px/14px 'Liberation Sans', sans-serif;color:#1a1a1a;white-space:nowrap;">815</div><div style="position:absolute;left:861.2px;top:329.2px;width:120px;height:14px;transform:rotate(-90deg);transform-origin:60px 7px;text-align:center;font:bold 12px/14px 'Liberation Sans', sans-serif;color:#1a1a1a;white-space:nowrap;">1177</div><div style="position:absolute;left:434.8px;top:289px;width:120px;height:14px;transform:rotate(-90deg);transform-origin:60px 7px;text-align:center;font:bold 10px/14px 'Liberation Sans', sans-serif;color:#1a1a1a;white-space:nowrap;">Berlin Street West</div><div style="position:absolute;left:883.5px;top:291px;width:120px;height:14px;transform:rotate(-90deg);transform-origin:60px 7px;text-align:center;font:bold 10px/14px 'Liberation Sans', sans-serif;color:#1a1a1a;white-space:nowrap;">Berlin Street East</div>
<div class="btn" style="left:822px;top:517px;width:69px;"></div>
<svg class="abs" style="left:842.5px;top:521px" width="13" height="11" viewBox="0 0 13 11">
<path d="M1,5.5 L4.5,9 L12,1.5" fill="none" stroke="#30a030" stroke-width="2.6"/>
</svg>
<div class="abs" style="left:858.4px;top:518.3px;font:10.4px/15px 'Liberation Sans', sans-serif;color:#222;transform:scaleX(0.8);transform-origin:0 0">OK</div>
<div class="btn" style="left:895px;top:517px;width:69px;"></div>
<svg class="abs" style="left:910px;top:521px" width="12" height="12" viewBox="0 0 12 12">
<path d="M1.5,1.5 L10.5,10.5 M10.5,1.5 L1.5,10.5" stroke="#e83020" stroke-width="2.6"/>
</svg>
<div class="abs" style="left:924px;top:518.3px;font:10.4px/15px 'Liberation Sans', sans-serif;color:#222;transform:scaleX(0.8);transform-origin:0 0">Cancel</div>
</div></body></html>
